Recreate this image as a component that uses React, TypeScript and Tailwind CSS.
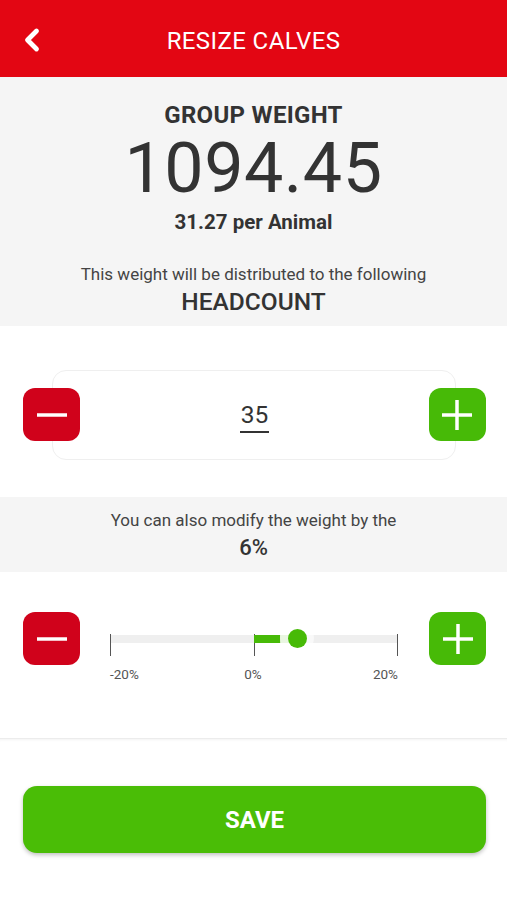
import { ChevronLeft } from "lucide-react";

function StepButton({ kind }: { kind: "minus" | "plus" }) {
  const isPlus = kind === "plus";
  return (
    <button
      className={`flex h-[53px] w-[57px] shrink-0 items-center justify-center rounded-[12px] ${
        isPlus ? "bg-[#47ba07]" : "bg-[#d0021b]"
      }`}
    >
      <svg width="36" height="36" viewBox="0 0 36 36">
        <path d="M3 18h30" stroke="white" strokeWidth="3.5" />
        {isPlus && <path d="M18 3v30" stroke="white" strokeWidth="3.5" />}
      </svg>
    </button>
  );
}

export default function App() {
  return (
    <div className="flex min-h-[900px] w-[507px] flex-col bg-white font-['Roboto',sans-serif] text-[#333]">
      {/* Header */}
      <header className="relative flex h-[77px] items-center justify-center bg-[#e30613] pt-[4px]">
        <ChevronLeft className="absolute left-[14px] top-[22px] text-white" size={36} strokeWidth={3.2} />
        <h1 className="text-[24px] tracking-[0.4px] text-white">RESIZE CALVES</h1>
      </header>

      {/* Group weight */}
      <section className="flex h-[249px] flex-col items-center bg-[#f5f5f5] pt-[24px]">
        <h2 className="text-[24px] font-bold leading-[28px] tracking-[0.3px]">GROUP WEIGHT</h2>
        <p className="mt-[6px] text-[70px] leading-[66px] tracking-[0.5px]">1094.45</p>
        <p className="mt-[8px] text-[20.5px] font-bold leading-[26px]">31.27 per Animal</p>
        <p className="mt-[28px] text-[17px] leading-[22px] text-[#444]">
          This weight will be distributed to the following
        </p>
        <p className="mt-[2px] text-[24.5px] font-medium leading-[30px]">HEADCOUNT</p>
      </section>

      {/* Headcount stepper */}
      <section className="flex h-[171px] items-center">
        <div className="ml-[52px] mr-[51px] mt-[6px] flex h-[90px] flex-1 items-center justify-between rounded-[14px] border border-[#efefef] bg-white">
          <div className="-ml-[30px]">
            <StepButton kind="minus" />
          </div>
          <span className="mt-[2px] border-b-2 border-[#333] px-[1px] text-[24.5px] leading-[32px]">35</span>
          <div className="-mr-[31px]">
            <StepButton kind="plus" />
          </div>
        </div>
      </section>

      {/* Percentage info */}
      <section className="flex h-[75px] flex-col items-center bg-[#f5f5f5] pt-[12px]">
        <p className="text-[17px] leading-[22px] text-[#444]">You can also modify the weight by the</p>
        <p className="mt-[3px] text-[22px] font-medium leading-[28px]">6%</p>
      </section>

      {/* Slider */}
      <section className="flex h-[166px] items-start pl-[23px] pr-[21px] pt-[40px]">
        <StepButton kind="minus" />
        <div className="ml-[30px] mr-[31px] flex-1 pt-[23px]">
          <div className="relative h-[8px] bg-[#efefef]">
            <span className="absolute left-0 top-[-1px] h-[22px] w-px bg-[#555]" />
            <span className="absolute left-1/2 top-[-1px] h-[22px] w-px bg-[#555]" />
            <span className="absolute right-0 top-[-1px] h-[22px] w-px bg-[#555]" />
            <span className="absolute left-1/2 top-0 h-[8px] w-[26px] bg-[#47ba07]" />
            <span className="absolute left-[170px] top-0 h-[8px] w-[18px] bg-[#c8e8b4]" />
            <span className="absolute left-[170px] top-[-14px] flex h-[34px] w-[34px] items-center justify-center rounded-full bg-white/60">
              <span className="h-[19px] w-[19px] rounded-full bg-[#47ba07]" />
            </span>
          </div>
          <div className="mt-[22px] flex justify-between text-[13.5px] leading-[18px] text-[#555]">
            <span>-20%</span>
            <span className="-ml-[6px]">0%</span>
            <span>20%</span>
          </div>
        </div>
        <StepButton kind="plus" />
      </section>

      {/* Save */}
      <section className="flex-1 border-t border-[#ececec] px-[21px] pl-[23px] pt-[47px] shadow-[inset_0_3px_3px_-2px_rgba(0,0,0,0.05)]">
        <button className="flex h-[67px] w-full items-center justify-center rounded-[14px] bg-[#4abd06] text-[24px] font-bold text-white shadow-[0_2px_4px_rgba(0,0,0,0.25)]">
          SAVE
        </button>
      </section>
    </div>
  );
}
